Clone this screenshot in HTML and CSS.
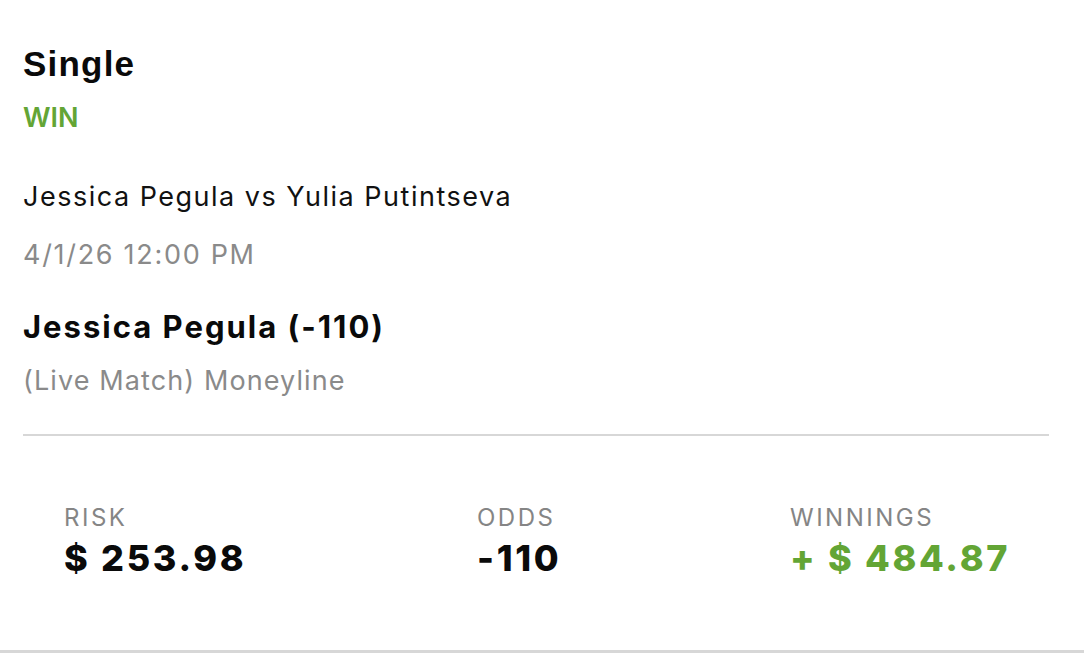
FILE: index.html
```html
<!DOCTYPE html>
<html>
<head>
<meta charset="utf-8">
<link rel="stylesheet" href="styles.css">
</head>
<body>
<div class="card">
  <div class="head">
    <div class="type">Single</div>
    <div class="status">WIN</div>
  </div>
  <div class="event">Jessica Pegula vs Yulia Putintseva</div>
  <div class="date">4/1/26 12:00 PM</div>
  <div class="pick">Jessica Pegula (-110)</div>
  <div class="market">(Live Match) Moneyline</div>
  <div class="divider"></div>
  <div class="stats">
    <div class="stat">
      <div class="label">RISK</div>
      <div class="value">$ 253.98</div>
    </div>
    <div class="stat">
      <div class="label">ODDS</div>
      <div class="value">-110</div>
    </div>
    <div class="stat">
      <div class="label">WINNINGS</div>
      <div class="value green">+ $ 484.87</div>
    </div>
  </div>
</div>
<div class="bottom-line"></div>
</body>
</html>
```
FILE: styles.css
```css
html, body {
  margin: 0;
  padding: 0;
  background: #ffffff;
}
body {
  width: 1084px;
  height: 654px;
  overflow: hidden;
  font-family: Inter, Roboto, "Liberation Sans", sans-serif;
  color: #111;
}
.card {
  padding: 44px 35px 0 23px;
}
.type {
  font-family: "Liberation Sans", Arial, sans-serif;
  font-weight: 700;
  font-size: 35px;
  letter-spacing: 1.2px;
  line-height: 40px;
  color: #0a0a0a;
}
.status {
  font-weight: 600;
  font-size: 27px;
  line-height: 34px;
  margin-top: 17px;
  color: #63a535;
}
.event {
  margin-top: 44px;
  font-size: 27px;
  letter-spacing: 1.5px;
  line-height: 36px;
  color: #111;
}
.date {
  margin-top: 22px;
  font-size: 27px;
  letter-spacing: 1.7px;
  line-height: 36px;
  color: #8a8a8a;
}
.pick {
  margin-top: 34px;
  font-size: 31px;
  font-weight: 700;
  letter-spacing: 2px;
  line-height: 40px;
  color: #0a0a0a;
}
.market {
  margin-top: 16px;
  font-size: 27px;
  letter-spacing: 1.1px;
  line-height: 36px;
  color: #8a8a8a;
}
.divider {
  margin-top: 35px;
  height: 2px;
  background: #d7d7d7;
}
.stats {
  display: grid;
  grid-template-columns: 413px 313px 1fr;
  padding-left: 41px;
  margin-top: 67px;
}
.label {
  font-size: 24px;
  letter-spacing: 2.5px;
  line-height: 30px;
  color: #858585;
}
.value {
  margin-top: 3px;
  font-size: 36px;
  font-weight: 800;
  letter-spacing: 2.7px;
  line-height: 44px;
  color: #0a0a0a;
}
.value.green {
  color: #63a535;
}
.bottom-line {
  margin-top: 70px;
  height: 3px;
  background: #d7d7d7;
}
```
